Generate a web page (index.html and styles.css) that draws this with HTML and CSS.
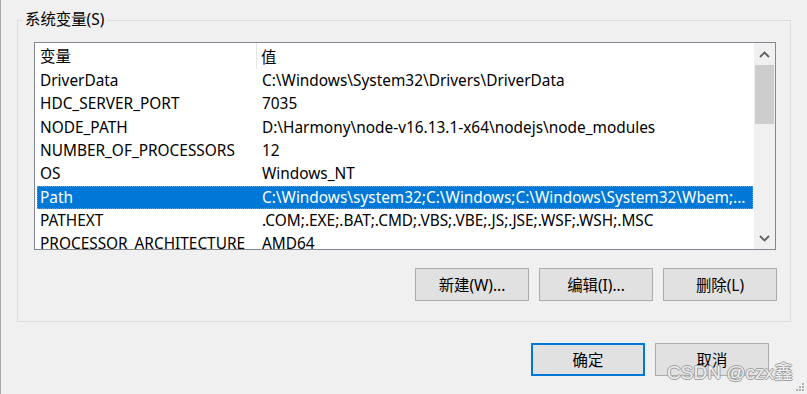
FILE: index.html
```html
<!DOCTYPE html>
<html lang="zh-CN">
<head>
<meta charset="utf-8">
<title>系统变量</title>
<link rel="stylesheet" href="styles.css">
</head>
<body>
<div class="dialog">
  <div class="group">
    <div class="legend">系统变量(S)</div>
    <div class="listbox">
      <div class="list-main">
        <div class="header">
          <div class="hcell c1">变量</div>
          <div class="hcell c2">值</div>
        </div>
        <div class="row"><div class="cell c1">DriverData</div><div class="cell c2">C:\Windows\System32\Drivers\DriverData</div></div>
        <div class="row"><div class="cell c1">HDC_SERVER_PORT</div><div class="cell c2">7035</div></div>
        <div class="row"><div class="cell c1">NODE_PATH</div><div class="cell c2">D:\Harmony\node-v16.13.1-x64\nodejs\node_modules</div></div>
        <div class="row"><div class="cell c1">NUMBER_OF_PROCESSORS</div><div class="cell c2">12</div></div>
        <div class="row"><div class="cell c1">OS</div><div class="cell c2">Windows_NT</div></div>
        <div class="row selected"><div class="cell c1">Path</div><div class="cell c2">C:\Windows\system32;C:\Windows;C:\Windows\System32\Wbem;...</div></div>
        <div class="row"><div class="cell c1">PATHEXT</div><div class="cell c2">.COM;.EXE;.BAT;.CMD;.VBS;.VBE;.JS;.JSE;.WSF;.WSH;.MSC</div></div>
        <div class="row"><div class="cell c1">PROCESSOR_ARCHITECTURE</div><div class="cell c2">AMD64</div></div>
      </div>
      <div class="scrollbar">
        <div class="arrow">
          <svg width="11" height="7" viewBox="0 0 11 7"><path d="M1 6 L5.5 1.5 L10 6" fill="none" stroke="#606060" stroke-width="1.8"/></svg>
        </div>
        <div class="track"><div class="thumb"></div></div>
        <div class="arrow">
          <svg width="11" height="7" viewBox="0 0 11 7"><path d="M1 1 L5.5 5.5 L10 1" fill="none" stroke="#606060" stroke-width="1.8"/></svg>
        </div>
      </div>
    </div>
    <div class="btn-row">
      <button class="btn">新建(W)...</button>
      <button class="btn">编辑(I)...</button>
      <button class="btn">删除(L)</button>
    </div>
  </div>
  <div class="dlg-row">
    <button class="btn default">确定</button>
    <button class="btn">取消</button>
  </div>
</div>
<div class="watermark">CSDN @czx鑫</div>
<div class="grip">
  <svg width="10" height="10" viewBox="0 0 10 10" fill="#b0b0b0">
    <rect x="7" y="1" width="2" height="2"/>
    <rect x="4" y="4" width="2" height="2"/><rect x="7" y="4" width="2" height="2"/>
    <rect x="1" y="7" width="2" height="2"/><rect x="4" y="7" width="2" height="2"/><rect x="7" y="7" width="2" height="2"/>
  </svg>
</div>
</body>
</html>
```

FILE: styles.css
```css
* { box-sizing: border-box; }
html, body {
  margin: 0;
  height: 394px;
  overflow: hidden;
}
body {
  background: #f0f0f0;
  font-family: "Noto Sans", "Noto Sans CJK SC", sans-serif;
  font-size: 15.4px;
  color: #000;
  border-left: 1px solid #a8a8a8;
  position: relative;
}
.dialog {
  padding: 20px 0 0 16px;
}
.group {
  width: 774px;
  height: 302px;
  border: 1px solid #dcdcdc;
}
.legend {
  margin: -10px 0 0 4px;
  padding: 0 3px;
  width: fit-content;
  background: #f0f0f0;
  line-height: 18px;
}
.listbox {
  margin: 13px 0 0 16px;
  width: 742px;
  height: 208px;
  border: 1px solid #828790;
  background: #fff;
  display: flex;
  overflow: hidden;
}
.list-main {
  flex: 1;
  overflow: hidden;
}
.header {
  display: flex;
  height: 26px;
  align-items: center;
}
.hcell.c1 {
  width: 222px;
  padding-left: 5px;
  border-right: 1px solid #e5e5e5;
  height: 26px;
  line-height: 27px;
}
.hcell.c2 {
  padding-left: 4px;
}
.row {
  display: flex;
  height: 23.33px;
  line-height: 24px;
  margin: 0 1px 0 2px;
  white-space: nowrap;
}
.cell.c1 {
  width: 220px;
  padding-left: 3px;
  flex: none;
}
.cell.c2 {
  padding-left: 5px;
  overflow: hidden;
}
.row.selected {
  background: #0078d7;
  color: #fff;
  outline: 1px dotted rgba(255,255,255,0.35);
  outline-offset: -1px;
}
.scrollbar {
  width: 21px;
  flex: none;
  background: #f0f0f0;
  display: flex;
  flex-direction: column;
  align-items: center;
}
.arrow {
  height: 22px;
  width: 100%;
  display: flex;
  align-items: center;
  justify-content: center;
}
.track {
  flex: 1;
  width: 100%;
  padding: 0 1px;
}
.thumb {
  height: 59px;
  background: #cdcdcd;
}
.btn-row {
  margin: 18px 13px 0 0;
  display: flex;
  justify-content: flex-end;
  gap: 10px;
}
.btn {
  width: 114px;
  height: 33px;
  background: #e1e1e1;
  border: 1px solid #adadad;
  font-family: "Noto Sans", "Noto Sans CJK SC", sans-serif;
  font-size: 15.4px;
  color: #000;
  padding: 0;
}
.btn.default {
  border: 2px solid #0078d7;
}
.dlg-row {
  margin: 21px 38px 0 0;
  display: flex;
  justify-content: flex-end;
  gap: 10px;
}
.watermark {
  position: absolute;
  right: 14px;
  bottom: 10px;
  font-family: "Liberation Sans", "Noto Sans CJK SC", sans-serif;
  font-size: 19px;
  color: rgba(250,250,250,0.9);
  text-shadow: 1px 0 0 #a0a0a0, -1px 0 0 #a0a0a0, 0 1px 0 #a0a0a0, 0 -1px 0 #a0a0a0;
}
.grip {
  position: absolute;
  right: 2px;
  bottom: 2px;
  line-height: 0;
}
```
